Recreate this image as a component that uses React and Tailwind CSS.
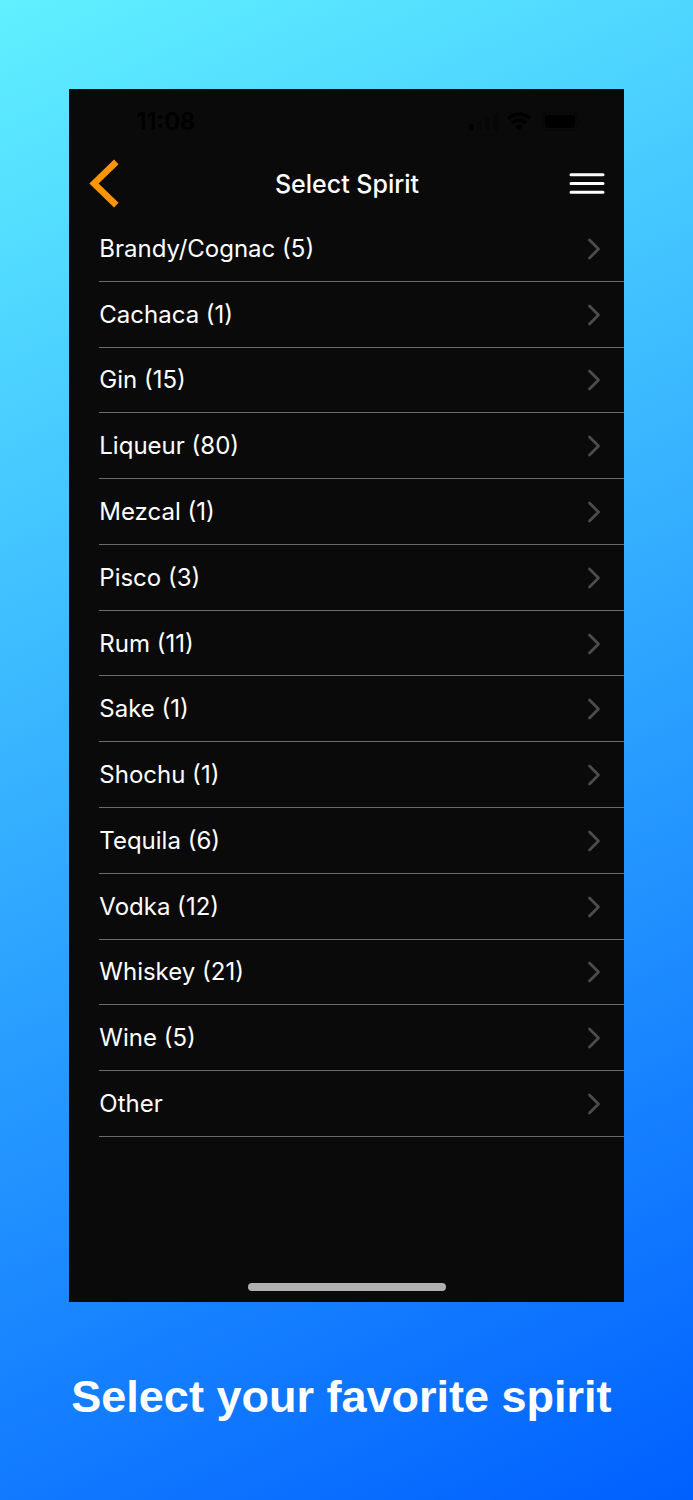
const spirits = [
  'Brandy/Cognac (5)', 'Cachaca (1)', 'Gin (15)', 'Liqueur (80)', 'Mezcal (1)',
  'Pisco (3)', 'Rum (11)', 'Sake (1)', 'Shochu (1)', 'Tequila (6)',
  'Vodka (12)', 'Whiskey (21)', 'Wine (5)', 'Other',
];

function StatusBar() {
  return (
    <div className="flex h-[62px] items-center justify-between pt-1 pl-[67px] pr-[42px] text-black">
      <span className="text-2xl font-semibold">11:08</span>
      <svg width="113" height="20" viewBox="0 0 113 20" fill="currentColor" aria-hidden="true">
        <rect x="0" y="12" width="5" height="7" rx="1.5" />
        <g opacity="0.25">
          <rect x="8" y="9" width="5" height="10" rx="1.5" />
          <rect x="16" y="5" width="5" height="14" rx="1.5" />
          <rect x="24" y="1" width="5" height="18" rx="1.5" />
        </g>
        <g fill="none" stroke="currentColor" strokeWidth="3.4">
          <path d="M39 6.700a16 16 0 0 1 22 0" />
          <path d="M43 11a10.200 10.200 0 0 1 14 0" />
        </g>
        <path d="M46 14.600a6 6 0 0 1 8 0l-4 4z" />
        <rect x="73.500" y="1" width="35" height="17" rx="5" fill="none" stroke="currentColor" opacity="0.4" />
        <rect x="76" y="3" width="30" height="13" rx="3" />
        <path d="M110.500 7q2.500 3 0 6z" opacity="0.4" />
      </svg>
    </div>
  );
}

export default function App() {
  return (
    <div className="flex min-h-screen flex-col bg-[linear-gradient(155deg,#60f0ff,#0060ff)] px-[10%] pt-[89px] pb-[74px] font-['Inter','Liberation_Sans',sans-serif] text-white">
      <main className="flex flex-col bg-[#0a0a0a]">
        <StatusBar />
        <header className="flex h-[65px] items-center justify-between pl-5 pr-[19px]">
          <button type="button" aria-label="Back" className="w-9 text-[#ff9500]">
            <svg width="30" height="50" viewBox="0 0 30 50" fill="none" stroke="currentColor" strokeWidth="6.500" aria-hidden="true">
              <path d="M27.300 2.800L5 24.500l22.300 21.700" />
            </svg>
          </button>
          <h1 className="text-[25px] leading-8 font-medium">Select Spirit</h1>
          <button type="button" aria-label="Menu">
            <svg width="36" height="24" viewBox="0 0 36 24" fill="none" stroke="currentColor" strokeWidth="3" strokeLinecap="round" aria-hidden="true">
              <path d="M2 2.800h32M2 11.500h32M2 20.200h32" />
            </svg>
          </button>
        </header>
        <ul className="flex min-h-[921px] flex-col pl-[30px]">
          {spirits.map((name) => (
            <li key={name} className="flex flex-1 border-b border-[#6b6b6b]">
              <a href="#" className="flex flex-1 items-center justify-between pt-px pr-[23px] text-2xl">
                {name}
                <svg width="14" height="22" viewBox="0 0 14 22" fill="none" stroke="#4c4c4e" strokeWidth="2.800" strokeLinecap="round" strokeLinejoin="round" aria-hidden="true">
                  <path d="M2.500 2l9 9-9 9" />
                </svg>
              </a>
            </li>
          ))}
        </ul>
        <div className="flex justify-center pt-[146px] pb-[11px]">
          <div className="h-2 w-[198px] rounded-full bg-[#b0b0b0]" />
        </div>
      </main>
      <p className="mt-[69px] pl-[2px] font-['Liberation_Sans',Arial,sans-serif] text-[45px] leading-[52px] font-bold whitespace-nowrap">
        Select your favorite spirit
      </p>
    </div>
  );
}
